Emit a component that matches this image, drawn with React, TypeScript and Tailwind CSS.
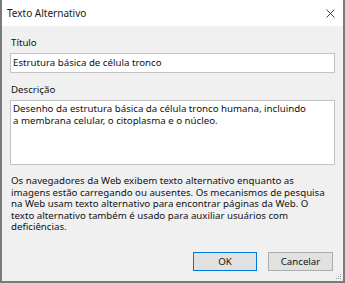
export default function App() {
  return (
    <div
      className="w-[345px] h-[283px] flex flex-col bg-[#f0f0f0] border-l-2 border-r-2 border-b-2 border-[#7a7a7a] relative"
      style={{ fontFamily: '"Noto Sans", "Open Sans", sans-serif' }}
    >
      <div className="h-[26px] bg-white flex items-center justify-between pl-[5px] pr-[8px] shrink-0">
        <span className="text-[10px] text-[#1a1a1a]">Texto Alternativo</span>
        <svg width="9" height="9" viewBox="0 0 9 9" className="mt-[1px]">
          <path d="M0.5 0.5 L8.5 8.5 M8.5 0.5 L0.5 8.5" stroke="#333" strokeWidth="0.9" />
        </svg>
      </div>
      <div className="flex flex-col px-[8px] pt-[11px] text-[9.7px] text-[#111] leading-[12px] flex-1">
        <div className="pl-[1px] h-[14px]">Título</div>
        <div className="mt-[2px] h-[20px] bg-white border border-[#c3c3c3] flex items-center px-[2px]">
          Estrutura básica de célula tronco
        </div>
        <div className="mt-[11px] pl-[1px] h-[14px]">Descrição</div>
        <div className="mt-[2px] h-[65px] bg-white border border-[#c3c3c3] px-[2px] pt-[2px] leading-[12px]">
          Desenho da estrutura básica da célula tronco humana, incluindo
          <br />a membrana celular, o citoplasma e o núcleo.
        </div>
        <p className="mt-[10px] pl-[1px] pr-[10px] leading-[11.5px]">
          Os navegadores da Web exibem texto alternativo enquanto as imagens estão carregando ou ausentes. Os mecanismos de pesquisa na Web usam texto alternativo para encontrar páginas da Web. O texto alternativo também é usado para auxiliar usuários com deficiências.
        </p>
        <div className="mt-auto mb-[10px] flex justify-end gap-[11px] pr-[2px]">
          <button className="w-[64px] h-[19px] bg-[#e1e1e1] border border-[#0078d7] text-[9.7px] leading-none flex items-center justify-center">
            OK
          </button>
          <button className="w-[65px] h-[19px] bg-[#e1e1e1] border border-[#adadad] text-[9.7px] leading-none flex items-center justify-center">
            Cancelar
          </button>
        </div>
      </div>
      <svg className="absolute right-[1px] bottom-[1px]" width="6" height="6" viewBox="0 0 6 6">
        <rect x="4" y="0" width="1" height="1" fill="#a0a0a0" />
        <rect x="2" y="2" width="1" height="1" fill="#a0a0a0" />
        <rect x="4" y="2" width="1" height="1" fill="#a0a0a0" />
        <rect x="0" y="4" width="1" height="1" fill="#a0a0a0" />
        <rect x="2" y="4" width="1" height="1" fill="#a0a0a0" />
        <rect x="4" y="4" width="1" height="1" fill="#a0a0a0" />
      </svg>
    </div>
  );
}
